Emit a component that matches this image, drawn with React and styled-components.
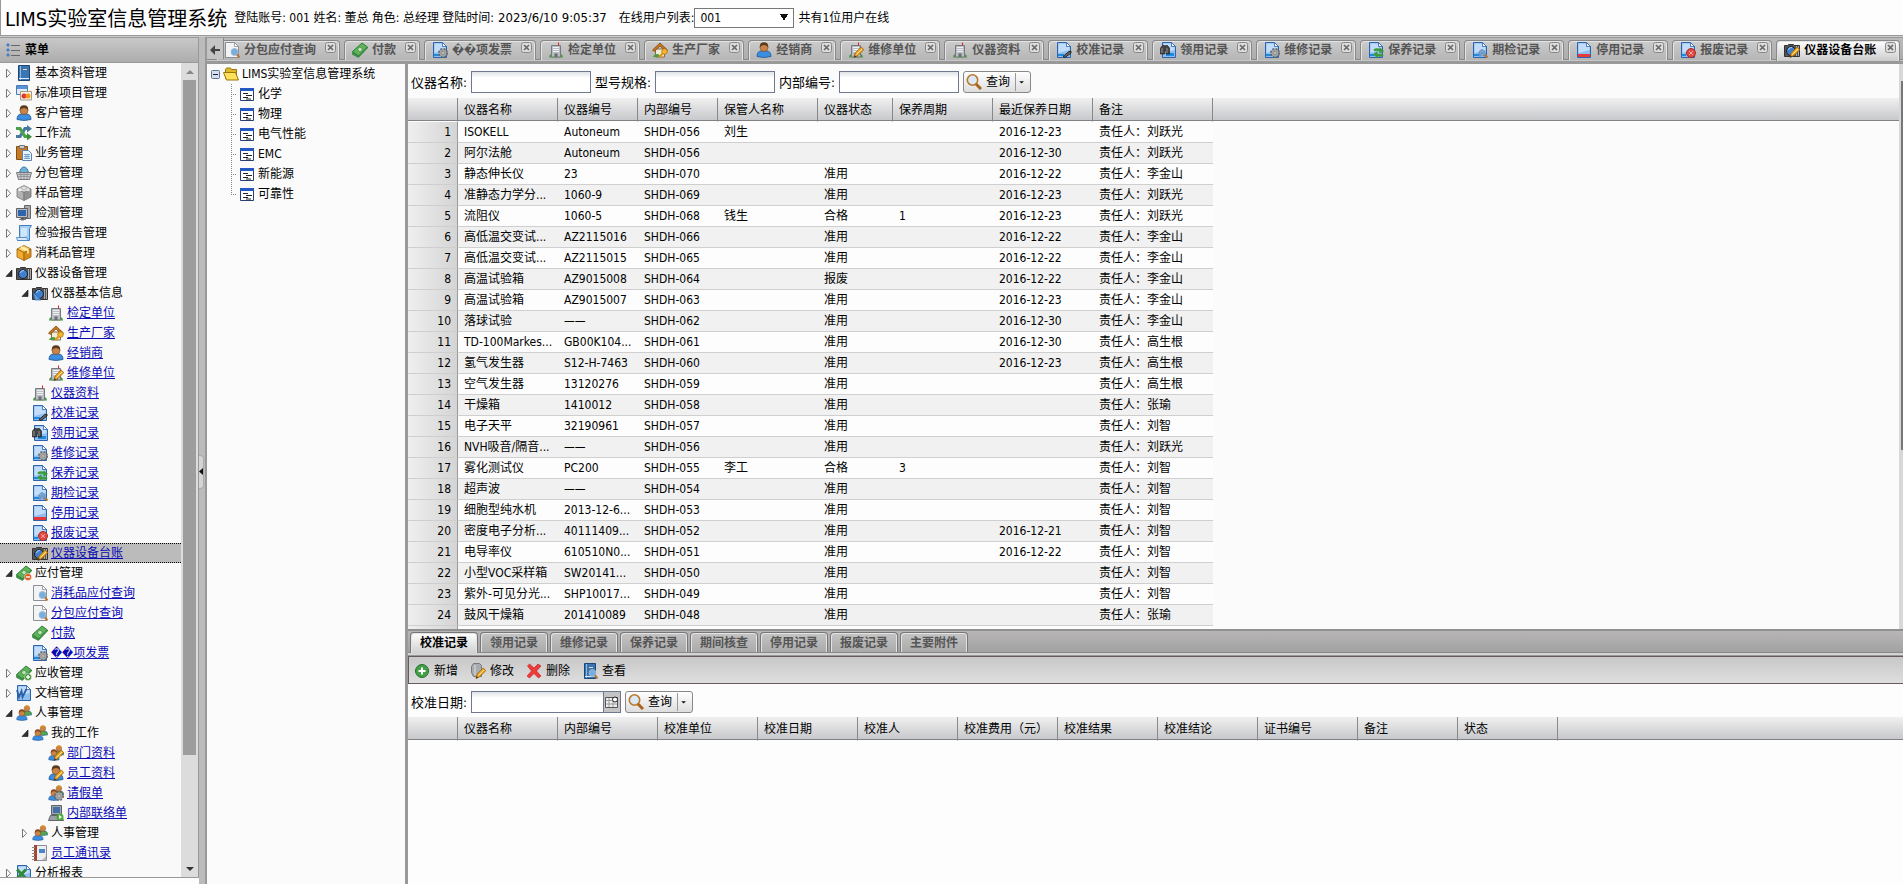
import React, { Fragment } from 'react'
import styled, { createGlobalStyle } from 'styled-components';

const GlobalStyle = createGlobalStyle`
  * { box-sizing: border-box; }
  body {
    margin: 0;
    overflow: hidden;
    background: #fdfdfd;
    color: #000;
    font: 12px/20px "DejaVu Sans Condensed", "Noto Sans CJK SC", sans-serif;
  }
  button, input, select { font: inherit; color: inherit; }
  button { padding: 0; border: 0; background: none; }
`

/* ---------- icons ---------- */

const Pencil = () => <g>
  <path d="M6 15.500l1.200-4.500 6-6 2.600 2.600-6 6z" fill="#f2a61f" stroke="#96600e" strokeWidth=".8" />
  <path d="M8.500 12.500l5.500-5.500" stroke="#ffe59a" />
  <path d="M6 15.500l.7-2.300 1.600 1.600z" fill="#333" />
</g>

const Gear = () => <g>
  <circle cx="11" cy="11" r="3.800" fill="#999" stroke="#666" strokeWidth="2.400" strokeDasharray="1.800 1.200" />
  <circle cx="11" cy="11" r="3.400" fill="#a2a2a2" />
  <circle cx="11" cy="11" r="1.300" fill="#eee" stroke="#666" strokeWidth=".6" />
</g>

const Lens = () => <g>
  <circle cx="10.500" cy="10" r="3.400" fill="#76aee2" stroke="#9fb6cc" strokeWidth="1" />
  <path d="M13 12.500l2.500 3" stroke="#b9722c" strokeWidth="2" />
</g>

const BlueDoc = () => <g>
  <path d="M1.500.500h9l4 4v11h-13z" fill="#8fbdf0" stroke="#2c63ad" />
  <path d="M2.500 1.500h7.500v3.500h3.500v3l-11 3z" fill="#c2ddfa" />
  <path d="M10.500.500v4h4z" fill="#fff" stroke="#2c63ad" strokeWidth=".8" />
</g>

const Page = () => <g>
  <path d="M1.500.500h9l4 4v11h-13z" fill="#f2f3f5" stroke="#8d8f94" />
  <path d="M10.500.500v4h4z" fill="#fff" stroke="#8d8f94" strokeWidth=".8" />
</g>

const Building = () => <g>
  <path d="M1 15.500q0-3 3-4h8q3 1 3 4z" fill="#4a9e3d" />
  <path d="M3.500 3.500h9v11.500h-9z" fill="#b9bdc2" stroke="#777b80" />
  <path d="M5 5.500h6M5 7.500h6M5 9.500h6" stroke="#eef3f8" />
  <path d="M6.500 11.500h3v3.500h-3z" fill="#686d73" />
  <path d="M10.500.500v3" stroke="#d22" />
</g>

const Camera = () => <g>
  <path d="M.5 3.500h3l1-1h5l1 1h5v11h-15z" fill="#555" stroke="#333" />
  <path d="M12.500 4v10M14.500 4v10" stroke="#aaa" />
  <circle cx="7" cy="9" r="4.500" fill="#3d7fd0" stroke="#222" />
  <path d="M4.500 8a3 3 0 0 1 3.500-2.500" stroke="#a9d2ff" fill="none" />
</g>

const Money = () => <g>
  <path d="M.5 9.500l9.500-8.500 5.500 4-9 9z" fill="#5db35a" stroke="#2f7c37" />
  <path d="M.5 10v2.500l6 3 9-9.500v-1l-9 9z" fill="#3f9447" stroke="#2f7c37" strokeWidth=".6" />
  <circle cx="8" cy="7.500" r="2.200" fill="#bfe5b5" stroke="#2f7c37" strokeWidth=".6" />
</g>

const Person = ({ hair = '#5b3a20', shirt = '#3b8de0' }) => <g>
  <path d="M1 14.500q0-5.500 4.500-5.500h5q4.500 0 4.500 5.500-7 2-14 0z" fill={shirt} stroke="#1e5796" strokeWidth=".8" />
  <circle cx="8" cy="5.500" r="4" fill="#c98248" stroke="#7a4a22" strokeWidth=".6" />
  <path d="M3.800 5.500q-.5-5.200 4.200-5.200t4.200 5.200q-1-2.500-4.200-2.500t-4.200 2.500z" fill={hair} />
</g>

const People = () => <g>
  <g transform="translate(5.500 0) scale(.68)"><Person hair="#d98d2b" shirt="#54a84a" /></g>
  <g transform="translate(0 4) scale(.74)"><Person hair="#8a4a1c" /></g>
</g>

const Book = () => <g>
  <path d="M2.500.500h11v15h-11z" fill="#3a76b4" stroke="#1d4673" />
  <path d="M4.500 1v14" stroke="#8fb9e2" />
  <path d="M6.500 3.500h5v2h-5z" fill="#cfe2f5" stroke="#1d4673" strokeWidth=".6" />
  <path d="M3 13.500h10" stroke="#dfe9f4" />
</g>

const Cube = ({ top, left, right, line }) => <g stroke={line} strokeWidth=".8">
  <path d="M8 .5l7 3.500-7 3.500-7-3.500z" fill={top} />
  <path d="M1 4l7 3.500v8l-7-3.500z" fill={left} />
  <path d="M15 4l-7 3.500v8l7-3.500z" fill={right} />
</g>

const Monitor = () => <g>
  <path d="M8.500.500h6v13h-6z" fill="#a7aaae" stroke="#666" />
  <path d="M.5 3.500h11v9h-11z" fill="#b9bdc2" stroke="#5e6165" />
  <path d="M2 5h8v6h-8z" fill="#2f63ae" />
  <path d="M3 14.500h7M5 13h3v2h-3z" stroke="#777" />
</g>

const Badge = ({ fill, children }) => <g>
  <circle cx="12" cy="12" r="3.500" fill={fill} stroke="#fff" strokeWidth=".5" />
  <path d={children} stroke="#fff" strokeWidth="1.400" fill="none" />
</g>

const icons = {
  book: <Book />,
  cards: <g>
    <path d="M.5.500h11v9h-11z" fill="#e2ecf8" stroke="#4a7db8" /><path d="M1 1h10v3h-10z" fill="#5a93d6" />
    <path d="M4.500 6.500h11v8.500h-11z" fill="#f6efe4" stroke="#a99a86" />
    <circle cx="8" cy="11" r="2.500" fill="#e0342c" /><circle cx="12" cy="11" r="2.500" fill="#f39b1f" />
  </g>,
  user: <Person />,
  flow: <g fill="none" strokeWidth="3.200">
    <path d="M0 11.500h4l5-8h3" stroke="#47789e" /><path d="M0 3.500h4l5 8h3" stroke="#4aa04a" />
    <path d="M11 0v7.500l5-3.750z" fill="#47789e" stroke="none" /><path d="M11 8v7.500l5-3.750z" fill="#3b8f3b" stroke="none" />
  </g>,
  clipboard: <g>
    <path d="M.5 1.500h11v13h-11z" fill="#c47a28" stroke="#85500f" /><path d="M3.500.500h5v3h-5z" fill="#ccc" stroke="#777" />
    <path d="M6.500 5.500h6l3 3v7h-9z" fill="#eaf2fb" stroke="#5c83ae" />
    <path d="M8 9.500h6M8 11.500h6M8 13.500h6M10 9v5M12 9v5" stroke="#5f95d0" strokeWidth=".8" />
  </g>,
  basket: <g>
    <path d="M3.500 8q1-6 4.500-6t4.500 6" fill="#6ab1dc" stroke="#38759e" />
    <path d="M.5 7.500h15l-2 7h-11z" fill="#c9cbce" stroke="#777" />
    <path d="M2 9.500h12M2 11.500h12M5 8v6M8 8v6M11 8v6" stroke="#8a8d91" strokeWidth=".8" />
  </g>,
  blocks: <g>
    <Cube top="#dcdcdc" left="#b2b2b2" right="#929292" line="#777" />
    <ellipse cx="8" cy="3" rx="2.500" ry="1.400" fill="#f4f4f4" stroke="#888" strokeWidth=".6" />
    <ellipse cx="4" cy="5" rx="2" ry="1.200" fill="#eee" /><ellipse cx="12" cy="5" rx="2" ry="1.200" fill="#ddd" />
  </g>,
  monitor: <Monitor />,
  scroll: <g>
    <path d="M3.500.500h12l-2 3v12h-12q2-1 2-4z" fill="#a6cff5" stroke="#3f7cba" />
    <path d="M5 3h6v7q-3 3-6 2z" fill="#cfe6fb" /><path d="M.5 12.500h10l2 3h-11z" fill="#d5e9fa" stroke="#3f7cba" strokeWidth=".8" />
  </g>,
  box: <g><Cube top="#ffd96a" left="#f3ab2a" right="#da8a16" line="#96600e" /><path d="M5 2l7 3.500v3" stroke="#fff3c4" fill="none" strokeWidth="1.500" /></g>,
  camera: <Camera />,
  cameraTool: <g><Camera /><path d="M1 7l8 8h-6z" fill="#5d9be0" stroke="#285a98" strokeWidth=".6" /></g>,
  cameraEdit: <g><Camera /><Pencil /></g>,
  building: <Building />,
  buildingEdit: <g><Building /><Pencil /></g>,
  house: <g>
    <path d="M3.500 7h9v8h-9z" fill="#f3ead8" stroke="#8c6a3c" /><path d="M1 15h7q0-3-3-3t-4 3z" fill="#4a9e3d" />
    <path d="M8 1l7.500 7-1.500 1.500-6-5.500-6 5.500-1.500-1.500z" fill="#c87820" stroke="#7b480e" strokeWidth=".8" />
    <circle cx="12.500" cy="9.500" r="2.800" fill="#f6b62c" stroke="#9b6a10" strokeWidth=".7" /><path d="M11 11l-3.500 4" stroke="#e09a1a" strokeWidth="2.400" />
  </g>,
  docPen: <g><BlueDoc /><path d="M2 13h6" stroke="#1d8be0" strokeWidth="2" /><path d="M7 14.500l6-5q3-1 2 1.500l-6 4.500z" fill="#666" stroke="#222" /></g>,
  docFind: <g>
    <g transform="translate(1 0)"><BlueDoc /></g>
    <path d="M6 12.500h8" stroke="#1d8be0" strokeWidth="3" />
    <path d="M.5 6l2-2.500h2l.5 1 .5-1h2l2 2.500v6h-3.500v-3h-1.500v3h-4z" fill="#444" stroke="#111" strokeWidth=".6" />
    <path d="M2 6v5M7 6v5" stroke="#aaa" strokeWidth=".8" />
  </g>,
  docGear: <g><BlueDoc /><path d="M2 13h6" stroke="#1d8be0" strokeWidth="2" /><Gear /></g>,
  docSync: <g>
    <BlueDoc /><path d="M2 13h4" stroke="#1d8be0" strokeWidth="2" />
    <path d="M6 8.500q3-2 6.500 0M15 12.500q-3 2-6.500 0" stroke="#3b9a3b" strokeWidth="2.400" fill="none" />
    <path d="M11.500 5v7l4.500-3zM9.500 9v7l-4.500-3.500z" fill="#3b9a3b" />
  </g>,
  docSearch: <g><BlueDoc /><path d="M2 13h6" stroke="#1d8be0" strokeWidth="2" /><path d="M7 14v-4q3-5 6 0v4h-2v-3h-2v3z" fill="#79a8d4" stroke="#5a7fa6" strokeWidth=".7" /><path d="M13 13l2.500 2.500" stroke="#b9722c" strokeWidth="2" /></g>,
  docStop: <g><BlueDoc /><path d="M2 12h12v3h-12z" fill="#e63a3a" /></g>,
  docBad: <g><BlueDoc /><path d="M2 13h4" stroke="#1d8be0" strokeWidth="2" /><circle cx="11" cy="11" r="4.500" fill="#dc4a42" stroke="#b22a25" /><path d="M9 9l4 4M13 9l-4 4" stroke="#f3a19c" /></g>,
  moneyOut: <g><Money /><Badge fill="#e2571b">M10 12h4</Badge></g>,
  moneyIn: <g><Money /><Badge fill="#3e8f2c">M10 12h4M12 10v4</Badge></g>,
  money: <Money />,
  pageSearch: <g><Page /><Lens /></g>,
  word: <g><BlueDoc /><path d="M1 5l2 7 2.500-6 1 6 4-8" stroke="#2a5fa8" strokeWidth="1.800" fill="none" /></g>,
  people: <People />,
  peopleEdit: <g><People /><Pencil /></g>,
  peopleGear: <g><People /><Gear /></g>,
  userEdit: <g><Person /><Pencil /></g>,
  computer: <g>
    <path d="M3.500.500h10v9h-10z" fill="#a4a7ab" stroke="#606468" /><path d="M5 2h7v6h-7z" fill="#456fa8" />
    <path d="M.5 15.500l2-5h11l2 5z" fill="#9c9fa3" stroke="#606468" /><circle cx="12" cy="12" r="3.500" fill="#4cab3b" /><path d="M11 10v4l3-2z" fill="#fff" />
  </g>,
  notebook: <g>
    <path d="M2.500.500h12v15h-12z" fill="#eceef1" stroke="#8d8f94" /><path d="M2 0h3v16h-3z" fill="#a4452c" />
    <path d="M0 2.500h3M0 5.500h3M0 8.500h3M0 11.500h3M0 14.500h3" stroke="#888" /><path d="M7 4h6v4h-6z" fill="#4d86c8" /><path d="M10 15l4-4v4z" fill="#bbb" />
  </g>,
  excel: <g><BlueDoc /><path d="M1 4.500l9 9M10 4.500l-9 9" stroke="#2f8a3c" strokeWidth="3" /></g>,
  folder: <g>
    <path d="M2.500 3.500l1-1.500h4l1 1.500h5v9h-11z" fill="#e0b82a" stroke="#99770b" /><path d="M.5 6.500h12l3 7.500h-12z" fill="#ffe25c" stroke="#99770b" />
  </g>,
  form: <g>
    <path d="M1.500 2.500h13v12h-13z" fill="#fff" stroke="#27406e" /><path d="M1 2h14v3h-14z" fill="#2459c4" />
    <path d="M4 7.500h5M4 11.500h5M7 9.500h6M7 13h5" stroke="#222" />
  </g>,
  add: <g><circle cx="8" cy="8" r="6.500" fill="#43a047" stroke="#21702a" /><path d="M8 4.500v7M4.500 8h7" stroke="#fff" strokeWidth="2" /></g>,
  edit: <g><path d="M3.500.500h6l2 2v11h-8q-3-3-2-10z" fill="#a9acb0" stroke="#77797d" /><path d="M5 2v10" stroke="#ddd" /><Pencil /></g>,
  remove: <path d="M1.500 3l2-2 4.500 4 4-4 3 2-4.500 5 4.500 5-2.500 2-4.500-4.500-4.500 4.500-2.500-2 4.500-5z" fill="#ee3a3a" stroke="#c01c1c" strokeWidth=".6" />,
  view: <g><Book /><Lens /></g>,
  search: <g><circle cx="6.500" cy="6" r="5.200" fill="#dbe9f7" stroke="#b9792c" strokeWidth="1.600" /><path d="M10 10l5 5" stroke="#a8661c" strokeWidth="3" /></g>,
  menu: <g>
    <path d="M2 2h2v2h-2zM2 7h2v2h-2zM2 12h2v2h-2z" fill="#4a7fc4" stroke="#4a7fc4" /><path d="M6 3.500h9M6 8.500h9M6 13.500h9" stroke="#666" />
  </g>,
  date: <g><path d="M1.500 3.500h12v10h-12z" fill="#eee" stroke="#555" /><path d="M2 6.500h11M2 10h11M5 4v9M9 4v9" stroke="#888" strokeWidth=".8" /><circle cx="11" cy="5.500" r="2.500" fill="#fff" stroke="#222" /></g>
}

const IconSvg = styled.svg`
  display: block;
  flex: none;
  width: 16px;
  height: 16px;
`

const Icon = ({ name }) => <IconSvg viewBox="0 0 16 16" aria-hidden="true">{icons[name]}</IconSvg>

/* ---------- page frame ---------- */

const Screen = styled.div`
  display: flex;
  flex-direction: column;
  height: 100vh;
  background: #bbb;
`

const TopBar = styled.header`
  display: flex;
  align-items: center;
  flex: none;
  height: 36px;
  padding: 0 4px;
  background: #fdfdfd;
  border-left: 1px solid #999;
  border-bottom: 1px solid #999;
  white-space: pre;
`

const SystemName = styled.h1`
  margin: 0 7px 0 0;
  padding-top: 3px;
  font-size: 20px;
  font-weight: normal;
`

const LoginTime = styled.span`
  margin: 0 12px 0 4px;
  font-size: 13px;
`

// the arrow is drawn with two gradients meeting at its tip
const UserSelect = styled.select`
  appearance: none;
  width: 100px;
  height: 20px;
  margin-right: 4px;
  padding: 0 0 0 5px;
  border: 1px solid #777;
  border-radius: 0;
  background:
    linear-gradient(to bottom left, #111 50%, transparent 50%) 89px 5px / 4px 7px no-repeat,
    linear-gradient(to bottom right, #111 50%, transparent 50%) 89px 5px / 4px 7px no-repeat,
    #fff;
  background-position: 85px 5px, 89px 5px, 0 0;
  line-height: 18px;
`

const Columns = styled.div`
  display: flex;
  flex: 1;
  min-height: 0;
  border-top: 1px solid #ccc;
`

const Column = styled.div`
  display: flex;
  flex-direction: column;
  min-width: 0;
  min-height: 0;
  ${p => p.$width ? `flex: none; width: ${p.$width}px;` : 'flex: 1;'}
`

const Splitter = styled.div`
  display: flex;
  align-items: center;
  flex: none;
  width: 8px;
  padding-top: 22px;
  background: #bbb;
  border-right: 2px solid #999;
`

const Collapse = styled.button`
  width: 5px;
  height: 34px;
  background: #d5d5d5;
  border: 1px solid #aaa;
  border-left: 0;
  border-radius: 0 4px 4px 0;
  svg { display: block; }
`

/* ---------- menu ---------- */

const MenuPanel = styled.nav`
  display: flex;
  flex-direction: column;
  flex: 1;
  min-height: 0;
  border-right: 1px solid #999;
  border-bottom: 1px solid #999;
`

const MenuTitle = styled.h2`
  display: flex;
  align-items: center;
  gap: 4px;
  flex: none;
  height: 26px;
  margin: 0;
  padding: 0 5px;
  border-top: 1px solid #999;
  border-bottom: 1px solid #999;
  background: linear-gradient(#c8c8c8, #adadad);
  font-size: 12px;
`

const MenuBody = styled.div`
  display: flex;
  flex: 1;
  min-height: 0;
  background: #f9f9f9;
`

const MenuList = styled.ul`
  flex: 1;
  margin: 0;
  padding: 0;
  overflow: hidden;
  list-style: none;
`

const MenuRow = styled.li`
  display: flex;
  align-items: center;
  height: 20px;
  padding-left: ${p => p.$level * 16}px;
  white-space: nowrap;
  ${p => p.$selected && `
    background: #bbb;
    border-top: 1px dotted #000;
    border-bottom: 1px dotted #000;
  `}
`

const Toggle = styled.svg`
  flex: none;
  width: 16px;
  height: 16px;
`

const MenuText = styled.span`
  margin-left: 3px;
`

const MenuLink = styled.a`
  margin-left: 3px;
  color: #0a0ab4;
  text-decoration: underline;
`

const ScrollTrack = styled.div`
  display: flex;
  flex-direction: column;
  align-items: center;
  flex: none;
  width: 17px;
  background: #dcdcdc;
`

const ScrollThumb = styled.div`
  flex: 675;
  width: 13px;
  background: #9d9d9d;
`

const ScrollRest = styled.div`
  flex: 105;
`

const ScrollArrow = styled.svg`
  flex: none;
  width: 16px;
  height: 17px;
`

const NextPanel = styled.div`
  flex: none;
  height: 6px;
  padding-left: 119px;
  background: #fdfdfd;
  &::after {
    content: '';
    display: block;
    width: 73px;
    height: 6px;
    border-bottom: 1px solid #888;
  }
`

/* ---------- tabs ---------- */

const TabStrip = styled.div`
  display: flex;
  flex: none;
  height: 27px;
  overflow: hidden;
  border-top: 1px solid #999;
  border-bottom: 3px solid #999;
  background: linear-gradient(#bbb, #adadad 21px, #888 21px, #888 22px, #c8c8c8 22px);
`

const StripArrow = styled.button`
  flex: none;
  position: relative;
  z-index: 1;
  width: 17px;
  height: 21px;
  background: #c4c4c4;
  border-right: 1px solid #888;
  svg { display: block; }
`

const TabList = styled.div`
  display: flex;
  gap: 4px;
  margin: 2px 0 0 -8px;
`

const Tab = styled.div`
  display: flex;
  flex: none;
  align-items: flex-start;
  height: ${p => p.$active ? 21 : 20}px;
  padding: 0 3px 0 7px;
  border: 1px solid #888;
  border-bottom: 0;
  border-radius: 4px 4px 0 0;
  background: ${p => p.$active ? 'linear-gradient(#fff, #ccc)' : 'linear-gradient(#ccc, #b5b5b5)'};
  box-shadow: inset 1px 1px #e4e4e4, inset -1px 0 #e4e4e4;
  color: ${p => p.$active ? '#000' : '#555'};
`

const TabButton = styled.button`
  display: flex;
  align-items: center;
  gap: 4px;
  height: 18px;
  padding-right: 9px;
  font-weight: bold;
  line-height: 18px;
  white-space: nowrap;
`

const CloseButton = styled.button`
  margin-top: 1px;
  svg { display: block; }
`

/* ---------- department tree ---------- */

const DeptPanel = styled.div`
  flex: none;
  width: 201px;
  background: #fbfbfb;
  border-right: 3px solid #999;
`

const DeptRoot = styled.div`
  display: flex;
  align-items: center;
  gap: 3px;
  height: 20px;
  padding-left: 4px;
  white-space: nowrap;
`

const DeptList = styled.ul`
  margin: 0 0 0 24px;
  padding: 0;
  list-style: none;
`

const DeptItem = styled.li`
  display: flex;
  align-items: center;
  gap: 3px;
  height: 20px;
  background: repeating-linear-gradient(#888 0 1px, transparent 1px 2px) 0 0 / 1px ${p => p.$last ? 11 : 20}px no-repeat;
  &::before {
    content: '';
    width: 5px;
    border-top: 1px dotted #888;
  }
`

/* ---------- forms and grids ---------- */

const Work = styled.div`
  display: flex;
  flex: 1;
  min-height: 0;
`

const GridPanel = styled.section`
  display: flex;
  flex: 1;
  min-height: 0;
`

const GridArea = styled.div`
  flex: 1;
  min-width: 0;
  overflow: hidden;
  background: #fbfbfb;
`

const EdgeScroll = styled.div`
  flex: none;
  width: 4px;
  padding: 17px 0 0 2px;
  background: #d8d8d8;
  &::after {
    content: '';
    display: block;
    height: 369px;
    background: #777;
  }
`

const DetailPanel = styled.section`
  flex: none;
  height: 255px;
  background: #fdfdfd;
`

const SearchForm = styled.form`
  display: flex;
  align-items: center;
  height: ${p => p.$compact ? 33 : 34}px;
  padding: 2px 3px 0;
  font-size: 13px;
  white-space: nowrap;
`

const FieldLabel = styled.label`
  width: 60px;
  padding-top: 2px;
`

const Field = styled.input`
  width: ${p => p.$width}px;
  height: 22px;
  margin-right: ${p => p.$width === 120 ? 4 : 0}px;
  padding: 0 3px;
  border: 1px solid #707890;
  border-radius: 0;
  background: linear-gradient(#dfe3e7, #fff 6px);
`

const DateButton = styled.button`
  width: 17px;
  height: 22px;
  margin-right: 4px;
  border: 1px solid #707890;
  border-left: 0;
  background: #c4c4c4;
`

const SearchButton = styled.button`
  display: flex;
  align-items: center;
  width: 68px;
  height: 22px;
  padding: 0 2px;
  border: 1px solid #888;
  border-radius: 3px;
  background: linear-gradient(#fff, #ddd);
  font-size: 12px;
  line-height: 18px;
`

const SearchText = styled.span`
  margin-left: 4px;
  padding-right: 5px;
  border-right: 1px solid #999;
`

const Grid = styled.table`
  width: 100%;
  table-layout: fixed;
  border-spacing: 0;
  white-space: nowrap;
`

const HeadCell = styled.th`
  height: 24px;
  padding: 0 6px;
  border-right: ${p => p.$filler ? 0 : 1}px solid #888;
  border-bottom: 1px solid #fdfdfd;
  background: linear-gradient(#f0f0f0, #c6c7ca);
  background-clip: padding-box;
  box-shadow: inset 0 -1px #808285;
  font-weight: normal;
  line-height: 18px;
  text-align: left;
`

const BodyRow = styled.tr`
  background: ${p => p.$odd ? '#f1f1f1' : '#fdfdfd'};
`

const Cell = styled.td`
  height: 21px;
  padding: 0 6px;
  border-bottom: 1px solid #cfcfcf;
  overflow: hidden;
  line-height: 18px;
`

const NumberCell = styled(Cell)`
  border-right: 1px solid #999;
  background: linear-gradient(90deg, #efefef, #d4d4d4);
  text-align: right;
`

const Blank = styled.td`
  background: #fbfbfb;
`

const DetailTabs = styled.div`
  display: flex;
  gap: 2px;
  height: 27px;
  padding: 1px 2px 0;
  border-top: 2px solid #909090;
  border-bottom: 1px solid #999;
  background: linear-gradient(#b8b5b6, #a2a2a2 21px, #888 21px, #888 22px, #d4d4d4 22px);
`

const DetailTab = styled.button`
  width: 68px;
  height: ${p => p.$active ? 21 : 20}px;
  border: 1px solid #777;
  border-bottom: 0;
  border-radius: 4px 4px 0 0;
  background: ${p => p.$active ? 'linear-gradient(#fff, #d0d0d0)' : 'linear-gradient(#c4c4c4, #aaa)'};
  box-shadow: inset 1px 1px #e4e4e4, inset -1px 0 #e4e4e4;
  color: ${p => p.$active ? '#000' : '#555'};
  font-weight: bold;
  line-height: 18px;
`

const Toolbar = styled.div`
  display: flex;
  align-items: center;
  gap: 12px;
  height: 28px;
  padding: 2px 5px 0;
  border: 1px solid #665a5c;
  border-right: 0;
  background: linear-gradient(#c8c8c8, #dedede);
`

const ToolButton = styled.button`
  display: flex;
  align-items: center;
  gap: 4px;
`

/* ---------- data ---------- */

// level, icon, label, kind: closed / open / link
const menu = [
  [0, 'book', '基本资料管理', 'closed'],
  [0, 'cards', '标准项目管理', 'closed'],
  [0, 'user', '客户管理', 'closed'],
  [0, 'flow', '工作流', 'closed'],
  [0, 'clipboard', '业务管理', 'closed'],
  [0, 'basket', '分包管理', 'closed'],
  [0, 'blocks', '样品管理', 'closed'],
  [0, 'monitor', '检测管理', 'closed'],
  [0, 'scroll', '检验报告管理', 'closed'],
  [0, 'box', '消耗品管理', 'closed'],
  [0, 'camera', '仪器设备管理', 'open'],
  [1, 'cameraTool', '仪器基本信息', 'open'],
  [2, 'building', '检定单位', 'link'],
  [2, 'house', '生产厂家', 'link'],
  [2, 'user', '经销商', 'link'],
  [2, 'buildingEdit', '维修单位', 'link'],
  [1, 'building', '仪器资料', 'link'],
  [1, 'docPen', '校准记录', 'link'],
  [1, 'docFind', '领用记录', 'link'],
  [1, 'docGear', '维修记录', 'link'],
  [1, 'docSync', '保养记录', 'link'],
  [1, 'docSearch', '期检记录', 'link'],
  [1, 'docStop', '停用记录', 'link'],
  [1, 'docBad', '报废记录', 'link'],
  [1, 'cameraEdit', '仪器设备台账', 'link'],
  [0, 'moneyOut', '应付管理', 'open'],
  [1, 'pageSearch', '消耗品应付查询', 'link'],
  [1, 'pageSearch', '分包应付查询', 'link'],
  [1, 'money', '付款', 'link'],
  [1, 'docGear', '��项发票', 'link'],
  [0, 'moneyIn', '应收管理', 'closed'],
  [0, 'word', '文档管理', 'closed'],
  [0, 'people', '人事管理', 'open'],
  [1, 'people', '我的工作', 'open'],
  [2, 'peopleEdit', '部门资料', 'link'],
  [2, 'userEdit', '员工资料', 'link'],
  [2, 'peopleGear', '请假单', 'link'],
  [2, 'computer', '内部联络单', 'link'],
  [1, 'people', '人事管理', 'closed'],
  [1, 'notebook', '员工通讯录', 'link'],
  [0, 'excel', '分析报表', 'closed']
]

const tabs = [
  ['pageSearch', '分包应付查询'],
  ['money', '付款'],
  ['docGear', '��项发票'],
  ['building', '检定单位'],
  ['house', '生产厂家'],
  ['user', '经销商'],
  ['buildingEdit', '维修单位'],
  ['building', '仪器资料'],
  ['docPen', '校准记录'],
  ['docFind', '领用记录'],
  ['docGear', '维修记录'],
  ['docSync', '保养记录'],
  ['docSearch', '期检记录'],
  ['docStop', '停用记录'],
  ['docBad', '报废记录'],
  ['cameraEdit', '仪器设备台账']
]

const activeTab = '仪器设备台账'

const departments = ['化学', '物理', '电气性能', 'EMC', '新能源', '可靠性']

const columns = [
  ['仪器名称', 100],
  ['仪器编号', 80],
  ['内部编号', 80],
  ['保管人名称', 100],
  ['仪器状态', 75],
  ['保养周期', 100],
  ['最近保养日期', 100],
  ['备注', 120]
]

const instruments = [
  ['ISOKELL', 'Autoneum', '056', '刘生', '', '', '12-23', '刘跃光'],
  ['阿尔法舱', 'Autoneum', '056', '', '', '', '12-30', '刘跃光'],
  ['静态伸长仪', '23', '070', '', '准用', '', '12-22', '李金山'],
  ['准静态力学分...', '1060-9', '069', '', '准用', '', '12-23', '刘跃光'],
  ['流阻仪', '1060-5', '068', '钱生', '合格', '1', '12-23', '刘跃光'],
  ['高低温交变试...', 'AZ2115016', '066', '', '准用', '', '12-22', '李金山'],
  ['高低温交变试...', 'AZ2115015', '065', '', '准用', '', '12-22', '李金山'],
  ['高温试验箱', 'AZ9015008', '064', '', '报废', '', '12-22', '李金山'],
  ['高温试验箱', 'AZ9015007', '063', '', '准用', '', '12-23', '李金山'],
  ['落球试验', '——', '062', '', '准用', '', '12-30', '李金山'],
  ['TD-100Markes...', 'GB00K104...', '061', '', '准用', '', '12-30', '高生根'],
  ['氢气发生器', 'S12-H-7463', '060', '', '准用', '', '12-23', '高生根'],
  ['空气发生器', '13120276', '059', '', '准用', '', '', '高生根'],
  ['干燥箱', '1410012', '058', '', '准用', '', '', '张瑜'],
  ['电子天平', '32190961', '057', '', '准用', '', '', '刘智'],
  ['NVH吸音/隔音...', '——', '056', '', '准用', '', '', '刘跃光'],
  ['雾化测试仪', 'PC200', '055', '李工', '合格', '3', '', '刘智'],
  ['超声波', '——', '054', '', '准用', '', '', '刘智'],
  ['细胞型纯水机', '2013-12-6...', '053', '', '准用', '', '', '刘智'],
  ['密度电子分析...', '40111409...', '052', '', '准用', '', '12-21', '刘智'],
  ['电导率仪', '610510N0...', '051', '', '准用', '', '12-22', '刘智'],
  ['小型VOC采样箱', 'SW20141...', '050', '', '准用', '', '', '刘智'],
  ['紫外-可见分光...', 'SHP10017...', '049', '', '准用', '', '', '刘智'],
  ['鼓风干燥箱', '201410089', '048', '', '准用', '', '', '张瑜']
]

const detailTabs = ['校准记录', '领用记录', '维修记录', '保养记录', '期间核查', '停用记录', '报废记录', '主要附件']

const tools = [['add', '新增'], ['edit', '修改'], ['remove', '删除'], ['view', '查看']]

const detailColumns = [
  '仪器名称', '内部编号', '校准单位', '校准日期', '校准人', '校准费用（元）',
  '校准结果', '校准结论', '证书编号', '备注', '状态'
].map(title => [title, 100])

/* ---------- parts ---------- */

const MenuToggle = ({ kind }) => <Toggle viewBox="0 0 16 16" aria-hidden="true">
  {kind === 'closed' && <path d="M6.500 4v8.500l4-4.250z" fill="#fff" stroke="#777" />}
  {kind === 'open' && <path d="M12 5v6.500h-6z" fill="#333" stroke="#111" strokeWidth=".6" />}
</Toggle>

const Menu = () => {
  return <MenuPanel>
    <MenuTitle><Icon name="menu" />菜单</MenuTitle>
    <MenuBody>
      <MenuList>
        {
          menu.map(([level, icon, label, kind]) => {
            return (
              <MenuRow key={level + label} $level={level} $selected={label === activeTab}>
                <MenuToggle kind={kind} />
                <Icon name={icon} />
                {
                  kind === 'link'
                    ? <MenuLink href="#">{label}</MenuLink>
                    : <MenuText>{label}</MenuText>
                }
              </MenuRow>
            )
          })
        }
      </MenuList>
      <ScrollTrack>
        <ScrollArrow viewBox="0 0 16 17"><path d="M8 7l4 4h-8z" fill="#888" /></ScrollArrow>
        <ScrollThumb />
        <ScrollRest />
        <ScrollArrow viewBox="0 0 16 17"><path d="M8 11l4-4h-8z" fill="#333" /></ScrollArrow>
      </ScrollTrack>
    </MenuBody>
  </MenuPanel>
}

const MainTabs = () => {
  return <TabStrip>
    <StripArrow aria-label="向左滚动">
      <svg width="16" height="21" viewBox="0 0 16 21"><path d="M3 12l5-5v4h5v2h-5v4z" fill="#444" /></svg>
    </StripArrow>
    <TabList>
      {
        tabs.map(([icon, label]) => {
          return (
            <Tab key={label} $active={label === activeTab}>
              <TabButton><Icon name={icon} />{label}</TabButton>
              <CloseButton aria-label={`关闭 ${label}`}>
                <svg width="11" height="11" viewBox="0 0 11 11">
                  <rect x=".5" y=".5" width="10" height="10" rx="2" fill="#ddd" stroke="#888" />
                  <path d="M3 3l5 5M8 3l-5 5" stroke="#666" strokeWidth="1.600" />
                </svg>
              </CloseButton>
            </Tab>
          )
        })
      }
    </TabList>
  </TabStrip>
}

const Departments = () => {
  return <DeptPanel>
    <DeptRoot>
      <svg width="9" height="9" viewBox="0 0 9 9">
        <rect x=".5" y=".5" width="8" height="8" rx="1" fill="#d6dfec" stroke="#5d7599" />
        <path d="M2 4.500h5" stroke="#123" />
      </svg>
      <Icon name="folder" />
      LIMS实验室信息管理系统
    </DeptRoot>
    <DeptList>
      {
        departments.map((name, i) => {
          return (
            <DeptItem key={name} $last={i === departments.length - 1}>
              <Icon name="form" />{name}
            </DeptItem>
          )
        })
      }
    </DeptList>
  </DeptPanel>
}

const SearchAction = () => <SearchButton type="button">
  <Icon name="search" />
  <SearchText>查询</SearchText>
  <svg width="15" height="16" viewBox="0 0 15 16"><path d="M4 7h6l-3 3z" fill="#111" /></svg>
</SearchButton>

const DataGrid = ({ cols, children }) => {
  return <Grid>
    <colgroup>
      <col width="50" />
      {cols.map(([title, width]) => <col key={title} width={width} />)}
      <col />
    </colgroup>
    <thead>
      <tr>
        <HeadCell />
        {cols.map(([title]) => <HeadCell key={title} scope="col">{title}</HeadCell>)}
        <HeadCell $filler />
      </tr>
    </thead>
    <tbody>{children}</tbody>
  </Grid>
}

const Instruments = () => {
  return <GridPanel>
    <GridArea>
      <SearchForm>
        {
          ['仪器名称', '型号规格', '内部编号'].map(label => {
            return (
              <Fragment key={label}>
                <FieldLabel htmlFor={label}>{label}:</FieldLabel>
                <Field id={label} $width={120} />
              </Fragment>
            )
          })
        }
        <SearchAction />
      </SearchForm>
      <DataGrid cols={columns}>
        {
          instruments.map(([name, code, inner, keeper, state, cycle, date, owner], i) => {
            return (
              <BodyRow key={i} $odd={i % 2 === 1}>
                <NumberCell>{i + 1}</NumberCell>
                <Cell>{name}</Cell>
                <Cell>{code}</Cell>
                <Cell>SHDH-{inner}</Cell>
                <Cell>{keeper}</Cell>
                <Cell>{state}</Cell>
                <Cell>{cycle}</Cell>
                <Cell>{date && `2016-${date}`}</Cell>
                <Cell>责任人：{owner}</Cell>
                <Blank />
              </BodyRow>
            )
          })
        }
        <BodyRow>
          <NumberCell />
          {columns.map(([title]) => <Cell key={title} />)}
          <Blank />
        </BodyRow>
      </DataGrid>
    </GridArea>
    <EdgeScroll />
  </GridPanel>
}

const Details = () => {
  return <DetailPanel>
    <DetailTabs>
      {detailTabs.map((label, i) => <DetailTab key={label} $active={i === 0}>{label}</DetailTab>)}
    </DetailTabs>
    <Toolbar>
      {tools.map(([icon, label]) => <ToolButton key={label}><Icon name={icon} />{label}</ToolButton>)}
    </Toolbar>
    <SearchForm $compact>
      <FieldLabel htmlFor="check-date">校准日期:</FieldLabel>
      <Field id="check-date" $width={133} />
      <DateButton type="button" aria-label="选择日期"><Icon name="date" /></DateButton>
      <SearchAction />
    </SearchForm>
    <DataGrid cols={detailColumns} />
  </DetailPanel>
}

export default () => {
  return <Fragment>
    <GlobalStyle />
    <Screen>
      <TopBar>
        <SystemName>LIMS实验室信息管理系统</SystemName>
        <span>登陆账号: 001 姓名: 董总 角色: 总经理 登陆时间:</span>
        <LoginTime>2023/6/10 9:05:37</LoginTime>
        <label htmlFor="online">在线用户列表:</label>
        <UserSelect id="online"><option>001</option></UserSelect>
        <span>共有1位用户在线</span>
      </TopBar>
      <Columns>
        <Column $width={199}>
          <Menu />
          <NextPanel />
        </Column>
        <Splitter>
          <Collapse aria-label="折叠菜单">
            <svg width="4" height="32" viewBox="0 0 4 32"><path d="M4 12v7l-4-3.500z" fill="#111" /></svg>
          </Collapse>
        </Splitter>
        <Column>
          <MainTabs />
          <Work>
            <Departments />
            <Column>
              <Instruments />
              <Details />
            </Column>
          </Work>
        </Column>
      </Columns>
    </Screen>
  </Fragment>
}
